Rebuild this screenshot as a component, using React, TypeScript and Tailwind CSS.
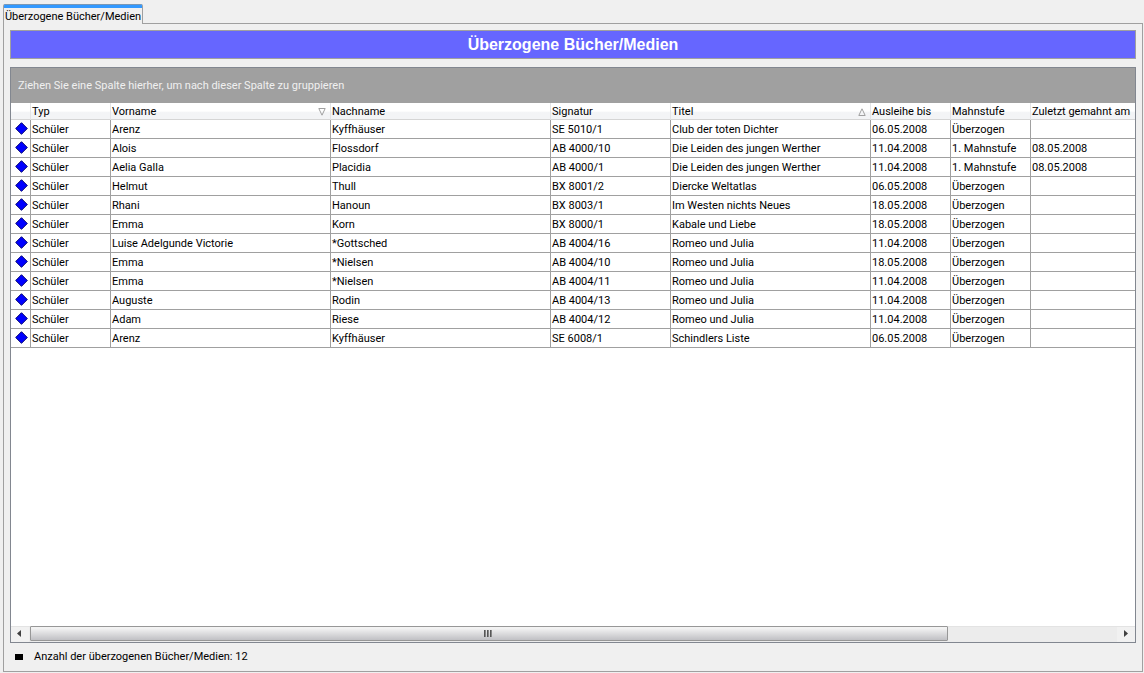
type Loan = {
  first: string;
  last: string;
  signature: string;
  title: string;
  due: string;
  level: string;
  reminded?: string;
};

const loans: Loan[] = [
  { first: 'Arenz', last: 'Kyffhäuser', signature: 'SE 5010/1', title: 'Club der toten Dichter', due: '06.05.2008', level: 'Überzogen' },
  { first: 'Alois', last: 'Flossdorf', signature: 'AB 4000/10', title: 'Die Leiden des jungen Werther', due: '11.04.2008', level: '1. Mahnstufe', reminded: '08.05.2008' },
  { first: 'Aelia Galla', last: 'Placidia', signature: 'AB 4000/1', title: 'Die Leiden des jungen Werther', due: '11.04.2008', level: '1. Mahnstufe', reminded: '08.05.2008' },
  { first: 'Helmut', last: 'Thull', signature: 'BX 8001/2', title: 'Diercke Weltatlas', due: '06.05.2008', level: 'Überzogen' },
  { first: 'Rhani', last: 'Hanoun', signature: 'BX 8003/1', title: 'Im Westen nichts Neues', due: '18.05.2008', level: 'Überzogen' },
  { first: 'Emma', last: 'Korn', signature: 'BX 8000/1', title: 'Kabale und Liebe', due: '18.05.2008', level: 'Überzogen' },
  { first: 'Luise Adelgunde Victorie', last: '*Gottsched', signature: 'AB 4004/16', title: 'Romeo und Julia', due: '11.04.2008', level: 'Überzogen' },
  { first: 'Emma', last: '*Nielsen', signature: 'AB 4004/10', title: 'Romeo und Julia', due: '18.05.2008', level: 'Überzogen' },
  { first: 'Emma', last: '*Nielsen', signature: 'AB 4004/11', title: 'Romeo und Julia', due: '11.04.2008', level: 'Überzogen' },
  { first: 'Auguste', last: 'Rodin', signature: 'AB 4004/13', title: 'Romeo und Julia', due: '11.04.2008', level: 'Überzogen' },
  { first: 'Adam', last: 'Riese', signature: 'AB 4004/12', title: 'Romeo und Julia', due: '11.04.2008', level: 'Überzogen' },
  { first: 'Arenz', last: 'Kyffhäuser', signature: 'SE 6008/1', title: 'Schindlers Liste', due: '06.05.2008', level: 'Überzogen' },
];

const columns: { label: string; width: string; sort?: 'asc' | 'desc' }[] = [
  { label: '', width: 'w-[20px]' },
  { label: 'Typ', width: 'w-[80px]' },
  { label: 'Vorname', width: 'w-[220px]', sort: 'desc' },
  { label: 'Nachname', width: 'w-[220px]' },
  { label: 'Signatur', width: 'w-[120px]' },
  { label: 'Titel', width: 'w-[200px]', sort: 'asc' },
  { label: 'Ausleihe bis', width: 'w-[80px]' },
  { label: 'Mahnstufe', width: 'w-[80px]' },
  { label: 'Zuletzt gemahnt am', width: '' },
];

function SortMark({ direction }: { direction: 'asc' | 'desc' }) {
  return (
    <svg width="8" height="8" viewBox="0 0 8 8" fill="none" stroke="#a0a0a0" className="mr-1 shrink-0">
      <path d={direction === 'desc' ? 'M0.8 0.5H7.2L4 7.2Z' : 'M0.8 7.5H7.2L4 0.8Z'} />
    </svg>
  );
}

function Diamond() {
  return (
    <svg width="13" height="13" viewBox="0 0 13 13" className="ml-auto block">
      <path d="M6.5 0.7L12.3 6.5L6.5 12.3L0.7 6.5Z" fill="#0000ff" stroke="#000070" />
    </svg>
  );
}

function Cell({ children }: { children?: string }) {
  return (
    <td className="h-[19px] overflow-hidden border-r border-b border-[#a0a0a0] p-0 pt-[2px] pl-px leading-4 whitespace-nowrap last:border-r-0">
      {children}
    </td>
  );
}

function HorizontalScrollbar() {
  return (
    <div className="flex h-4 border-t border-[#e3e3e3] bg-[#ececec]">
      <button type="button" aria-label="Nach links" className="flex w-[18px] items-center justify-center bg-[#f1f1f1] pr-[2px] pb-[2px]">
        <svg width="4" height="7" viewBox="0 0 4 7"><path d="M4 0V7L0 3.5Z" fill="#404040" /></svg>
      </button>
      <div className="flex min-w-0 flex-1">
        <div className="-mt-px ml-px flex h-[15px] w-[84.4%] items-center justify-center gap-px rounded-[1px] border border-[#979797] bg-linear-to-b from-[#f3f3f3] from-10% via-[#dcdcde] to-[#c0c0c4] pr-[2px]">
          <span className="h-[7px] w-[2px] bg-linear-to-r from-[#404040] to-[#a0a0a0]" />
          <span className="h-[7px] w-[2px] bg-linear-to-r from-[#404040] to-[#a0a0a0]" />
          <span className="h-[7px] w-[2px] bg-linear-to-r from-[#404040] to-[#a0a0a0]" />
        </div>
      </div>
      <button type="button" aria-label="Nach rechts" className="flex w-[18px] items-center justify-center bg-[#f1f1f1] pb-[2px]">
        <svg width="4" height="7" viewBox="0 0 4 7"><path d="M0 0V7L4 3.5Z" fill="#404040" /></svg>
      </button>
    </div>
  );
}

export default function App() {
  return (
    <div className="flex min-h-screen flex-col bg-[#f0f0f0] pt-1 pr-px pb-px pl-[3px] font-[Roboto,Tahoma,sans-serif] text-[11px] text-black">
      <div role="tablist" className="relative z-10 -mb-px flex">
        <button
          type="button"
          role="tab"
          aria-selected="true"
          className="h-5 w-[140px] overflow-hidden rounded-t-[2px] border-r border-l border-[#a0a0a0] bg-[#f0f0f0] text-center leading-4 whitespace-nowrap"
        >
          <span className="mb-px block h-1 border-t border-[#7a98b5] bg-[#3399ff]" />
          Überzogene Bücher/Medien
        </button>
      </div>
      <main className="flex flex-1 flex-col border border-[#a0a0a0] px-[6px] pt-[6px]">
        <h1 className="border border-[#a0a0a0] bg-[#6666ff] text-center font-['Liberation_Sans',Arial,sans-serif] text-base leading-[27px] font-bold text-white">
          Überzogene Bücher/Medien
        </h1>

        <section className="mt-2 flex flex-1 flex-col border border-[#828790] bg-white">
          <div className="flex h-[35px] items-center bg-[#a0a0a0] pt-[2px] pl-[7px] text-[#f0f0f0]">
            Ziehen Sie eine Spalte hierher, um nach dieser Spalte zu gruppieren
          </div>
          <div className="flex-1">
            <table className="w-full table-fixed border-separate border-spacing-0">
              <thead>
                <tr>
                  {columns.map((column) => (
                    <th
                      key={column.label}
                      aria-sort={column.sort === 'asc' ? 'ascending' : column.sort === 'desc' ? 'descending' : undefined}
                      className={`${column.width} h-[17px] overflow-hidden border-r border-b border-r-[#e3e4e6] border-b-[#d5d5d5] bg-linear-to-b from-white from-50% to-[#f3f4f6] to-60% p-0 pt-px pl-px text-left leading-[15px] font-normal whitespace-nowrap last:border-r-0`}
                    >
                      <span className="flex items-center justify-between">
                        {column.label}
                        {column.sort && <SortMark direction={column.sort} />}
                      </span>
                    </th>
                  ))}
                </tr>
              </thead>
              <tbody>
                {loans.map((loan) => (
                  <tr key={loan.signature}>
                    <td className="h-[19px] border-r border-b border-[#a0a0a0] p-0 pr-[2px] pb-px">
                      <Diamond />
                    </td>
                    <Cell>Schüler</Cell>
                    <Cell>{loan.first}</Cell>
                    <Cell>{loan.last}</Cell>
                    <Cell>{loan.signature}</Cell>
                    <Cell>{loan.title}</Cell>
                    <Cell>{loan.due}</Cell>
                    <Cell>{loan.level}</Cell>
                    <Cell>{loan.reminded}</Cell>
                  </tr>
                ))}
              </tbody>
            </table>
          </div>
          <HorizontalScrollbar />
        </section>

        <footer className="flex h-[28px] items-center gap-[11px] pl-[5px]">
          <span className="h-[6px] w-2 bg-black" />
          Anzahl der überzogenen Bücher/Medien: 12
        </footer>
      </main>
    </div>
  );
}
